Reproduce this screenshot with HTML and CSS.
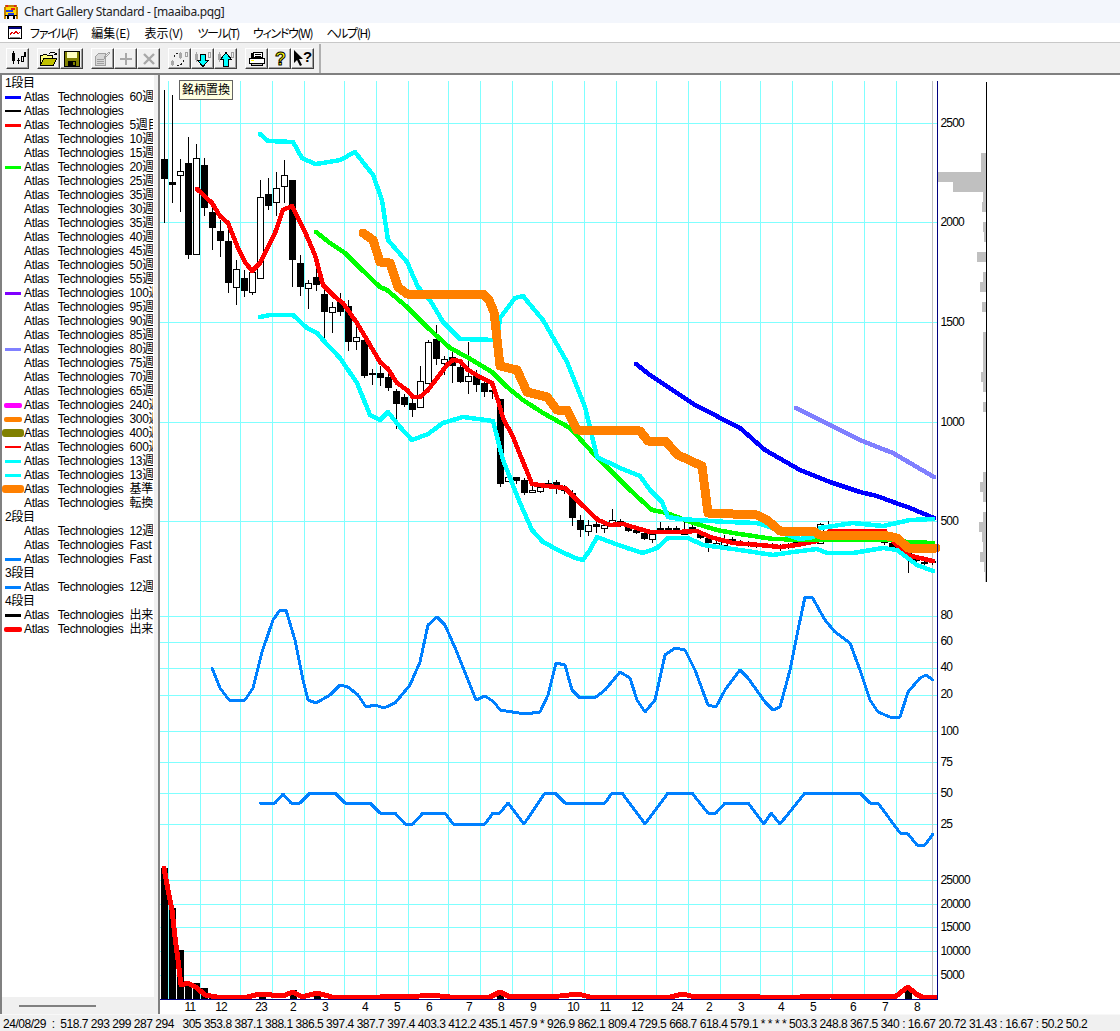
FILE: index.html
```html
<!DOCTYPE html>
<html lang="ja">

<head>
    <meta charset="UTF-8">
    <title>Chart Gallery Standard - [maaiba.pqg]</title>
    <link rel="stylesheet" href="styles.css">
</head>

<body>
    <div class="app">
        <header class="titlebar">
            <svg class="app-icon" width="16" height="16" viewBox="0 0 16 16" shape-rendering="crispEdges">
                <path fill="#c08000" d="M2 1h12v2H2zM1 3h2v12H1zM13 3h2v12h-2z"/>
                <path fill="#ffd800" d="M3 3h10v8H3z"/>
                <path fill="#e02020" d="M3 1h2v2H3zM11 1h2v2h-2zM8 4h4v2H8z"/>
                <path fill="#2040e0" d="M3 6h7v2H3zM5 9h6v2H5z"/>
                <path fill="#000" d="M2 11h12v1H2zM4 12h2v3H4zM10 12h2v3h-2z"/>
            </svg>
            <span>Chart Gallery Standard - [maaiba.pqg]</span>
        </header>

        <nav class="menubar">
            <svg class="doc-icon" width="14" height="13" viewBox="0 0 14 13" shape-rendering="crispEdges">
                <path fill="#fff" stroke="#000" d="M.5.5h13v12H.5z"/>
                <path fill="#000080" d="M1 1h12v2H1z"/>
                <path fill="none" stroke="#e00000" d="M2 9l2-3 2 2 2-3 2 3 2-2"/>
                <path fill="none" stroke="#808080" d="M2 11h10"/>
            </svg>
            <ul class="menu">
                <li class="kana">ファイル(F)</li>
                <li>編集(E)</li>
                <li>表示(V)</li>
                <li class="kana">ツール(T)</li>
                <li class="kana">ウィンドウ(W)</li>
                <li class="kana">ヘルプ(H)</li>
            </ul>
        </nav>

        <div class="toolbar">
            <div class="tool-group">
                <button class="tool"><svg width="16" height="15" viewBox="0 0 16 15" shape-rendering="crispEdges"><path fill="#000" d="M3 0h1v2h1v8H4v3H3v-3H2V2h1zM8 7h1v2h1v1H9v3H8v-3H7V9h1z"/><path fill="none" stroke="#000" d="M11.500 5.500h2v5h-2zM14.500 1.500h1v4h-1z"/></svg></button>
            </div>
            <div class="tool-group">
                <button class="tool"><svg width="18" height="16" viewBox="0 0 18 16" shape-rendering="crispEdges"><path fill="#ffff80" stroke="#000" d="M.5 4.500h2l1-1h3l1 1h5v3h-8l-4 7z"/><path fill="#c0c000" stroke="#000" d="M.5 14.500l3-7h13l-3 7z"/><path fill="none" stroke="#000" d="M9 3l2-2h3l2 2M14 3h3M16.500 2v2"/></svg></button>
                <button class="tool"><svg width="16" height="16" viewBox="0 0 16 16" shape-rendering="crispEdges"><path fill="#000" d="M0 0h16v16H0z"/><path fill="#808000" d="M1 1h14v14H1z"/><path fill="#ffffc0" d="M3 1h10v6H3z"/><path fill="#000" d="M4 10h8v5H4z"/><path fill="#808000" d="M9 11h2v3H9z"/></svg></button>
            </div>
            <div class="tool-group">
                <button class="tool" disabled><svg width="18" height="16" viewBox="0 0 18 16" shape-rendering="crispEdges"><path fill="#d8d8d8" stroke="#a0a0a0" d="M1.500 5.500l3-3h7v12h-10z"/><path fill="none" stroke="#a0a0a0" d="M3 8h7M3 10h7M3 12h7M12 6l4-4-1-1-5 5v1h2"/></svg></button>
                <button class="tool" disabled><svg width="14" height="14" viewBox="0 0 14 14" shape-rendering="crispEdges"><path fill="#a8a8a8" d="M6 1h2v5h5v2H8v5H6V8H1V6h5z"/></svg></button>
                <button class="tool" disabled><svg width="14" height="14" viewBox="0 0 14 14"><path stroke="#a8a8a8" stroke-width="2.400" d="M2 2l10 10M12 2L2 12"/></svg></button>
            </div>
            <div class="tool-group">
                <button class="tool" disabled><svg width="18" height="16" viewBox="0 0 18 16" shape-rendering="crispEdges"><path fill="#a8a8a8" d="M1 9h1v1h1v4H2v1H1v-1H0v-4h1zM9 1h1v1h1v5h-1v1H9V7H8V2h1z"/><path fill="none" stroke="#202020" stroke-dasharray="2 2" d="M7 2.500H5L3 5v3M6 14.500h3l3-3V9"/><path fill="none" stroke="#a0a0a0" d="M14.500 1.500h2v4h-2z"/></svg></button>
                <button class="tool"><svg width="18" height="16" viewBox="0 0 18 16" shape-rendering="crispEdges"><path fill="#a8a8a8" d="M2 1h1v2h1v6H3v2H2V9H1V3h1z"/><path fill="none" stroke="#a0a0a0" d="M14.500 1.500h2v5h-2z"/><path fill="#00ffff" stroke="#000" d="M6.500 3.500h5v6h3l-5.500 6-5.500-6h3z"/></svg></button>
                <button class="tool"><svg width="18" height="16" viewBox="0 0 18 16" shape-rendering="crispEdges"><path fill="#a8a8a8" d="M2 1h1v2h1v6H3v2H2V9H1V3h1z"/><path fill="none" stroke="#a0a0a0" d="M14.500 1.500h2v5h-2z"/><path fill="#00ffff" stroke="#000" d="M6.500 15.500v-7h-3l5.500-7 5.500 7h-3v7z"/></svg></button>
            </div>
            <div class="tool-group">
                <button class="tool"><svg width="18" height="16" viewBox="0 0 18 16" shape-rendering="crispEdges"><path fill="#fff" stroke="#000" d="M5.500 1.500h9v5h-9zM1.500 7.500h15v5h-15z"/><path fill="#c0c0c0" stroke="#000" d="M3.500 12.500h11v2h-11z"/><path fill="#000" d="M3 2h2v5H3zM7 3h6v1H7zM7 5h6v1H7z"/><path fill="#ffff00" d="M3 9h3v1H3z"/></svg></button>
                <button class="tool"><svg width="14" height="18" viewBox="0 0 14 18"><text class="qmark" x="2" y="15">?</text></svg></button>
                <button class="tool"><svg width="20" height="17" viewBox="0 0 20 17"><path fill="#000" d="M1 0l9 9H6l3 6-2 1-3-6-3 3z"/><text class="qhelp" x="10" y="12">?</text></svg></button>
            </div>
        </div>

        <main class="workspace">
            <aside class="legend-pane">
                <ul class="legend">
                    <li class="row"><span class="head">1段目</span></li>
                    <li class="row"><i class="sw c-blue"></i>Atlas   Technologies  60週</li>
                    <li class="row"><i class="sw thin c-black"></i>Atlas   Technologies</li>
                    <li class="row"><i class="sw c-red"></i>Atlas   Technologies  5週目</li>
                    <li class="row"><i class="sw none"></i>Atlas   Technologies  10週</li>
                    <li class="row"><i class="sw none"></i>Atlas   Technologies  15週</li>
                    <li class="row"><i class="sw c-green"></i>Atlas   Technologies  20週</li>
                    <li class="row"><i class="sw none"></i>Atlas   Technologies  25週</li>
                    <li class="row"><i class="sw none"></i>Atlas   Technologies  35週</li>
                    <li class="row"><i class="sw none"></i>Atlas   Technologies  30週</li>
                    <li class="row"><i class="sw none"></i>Atlas   Technologies  35週</li>
                    <li class="row"><i class="sw none"></i>Atlas   Technologies  40週</li>
                    <li class="row"><i class="sw none"></i>Atlas   Technologies  45週</li>
                    <li class="row"><i class="sw none"></i>Atlas   Technologies  50週</li>
                    <li class="row"><i class="sw none"></i>Atlas   Technologies  55週</li>
                    <li class="row"><i class="sw c-violet"></i>Atlas   Technologies  100週</li>
                    <li class="row"><i class="sw none"></i>Atlas   Technologies  95週</li>
                    <li class="row"><i class="sw none"></i>Atlas   Technologies  90週</li>
                    <li class="row"><i class="sw none"></i>Atlas   Technologies  85週</li>
                    <li class="row"><i class="sw c-lilac"></i>Atlas   Technologies  80週</li>
                    <li class="row"><i class="sw none"></i>Atlas   Technologies  75週</li>
                    <li class="row"><i class="sw none"></i>Atlas   Technologies  70週</li>
                    <li class="row"><i class="sw none"></i>Atlas   Technologies  65週</li>
                    <li class="row"><i class="sw mid c-magenta"></i>Atlas   Technologies  240週</li>
                    <li class="row"><i class="sw mid c-orange"></i>Atlas   Technologies  300週</li>
                    <li class="row"><i class="sw big c-olive"></i>Atlas   Technologies  400週</li>
                    <li class="row"><i class="sw thin c-red"></i>Atlas   Technologies  600週</li>
                    <li class="row"><i class="sw c-cyan"></i>Atlas   Technologies  13週</li>
                    <li class="row"><i class="sw c-cyan"></i>Atlas   Technologies  13週</li>
                    <li class="row"><i class="sw big c-orange"></i>Atlas   Technologies  基準</li>
                    <li class="row"><i class="sw none"></i>Atlas   Technologies  転換</li>
                    <li class="row"><span class="head">2段目</span></li>
                    <li class="row"><i class="sw none"></i>Atlas   Technologies  12週</li>
                    <li class="row"><i class="sw none"></i>Atlas   Technologies  Fast</li>
                    <li class="row"><i class="sw c-sky"></i>Atlas   Technologies  Fast</li>
                    <li class="row"><span class="head">3段目</span></li>
                    <li class="row"><i class="sw c-sky"></i>Atlas   Technologies  12週</li>
                    <li class="row"><span class="head">4段目</span></li>
                    <li class="row"><i class="sw c-black"></i>Atlas   Technologies  出来</li>
                    <li class="row"><i class="sw mid c-red"></i>Atlas   Technologies  出来</li>
                </ul>
                <div class="legend-scroll"><span class="thumb"></span></div>
            </aside>

            <section class="chart-pane">
                <div class="tip">銘柄置換</div>
                <svg class="chart" width="960" height="938" viewBox="160 75 960 938" shape-rendering="crispEdges">
                    <!-- 罫線 -->
                    <path class="grid" d="M168.500 81V999M200.500 81V999M240.500 81V999M272.500 81V999M304.500 81V999M344.500 81V999M376.500 81V999M408.500 81V999M448.500 81V999M480.500 81V999M512.500 81V999M552.500 81V999M584.500 81V999M616.500 81V999M656.500 81V999M688.500 81V999M720.500 81V999M760.500 81V999M792.500 81V999M832.500 81V999M864.500 81V999M896.500 81V999"/>
                    <path class="grid" d="M160 123.500H938M160 222.500H938M160 322.500H938M160 422.500H938M160 521.500H938M160 616.500H938M160 642.500H938M160 668.500H938M160 695.500H938M160 731.500H938M160 762.500H938M160 793.500H938M160 824.500H938M160 880.500H938M160 904.500H938M160 927.500H938M160 951.500H938M160 975.500H938"/>
                    <path class="edge-gray" d="M932.500 81V999"/>

                    <!-- 価格帯別 -->
                    <path class="hist" d="M981 153h5v19h-5zM937 172h49v10h-49zM953 182h33v10h-33zM983 192h3v10h-3zM982 202h4v10h-4zM983 222h3v10h-3zM984 232h2v10h-2zM977 252h9v10h-9zM983 272h3v10h-3zM980 282h6v10h-6zM982 302h4v10h-4zM983 332h3v40h-3zM981 372h5v10h-5zM983 382h3v10h-3zM983 402h3v10h-3zM983 472h3v10h-3zM980 482h6v10h-6zM983 492h3v10h-3zM983 512h3v10h-3zM979 522h7v10h-7zM982 532h4v10h-4zM983 542h3v10h-3zM980 552h6v10h-6zM984 562h2v10h-2zM985 572h1v10h-1z"/>
                    <path class="axis-black" d="M986.500 82V582"/>

                    <!-- ローソク足 -->
                    <path class="wick" d="M164.500 90V223M172.500 95V203M180.500 159V212M188.500 137V259M196.500 144V254M204.500 158V216M212.500 208V250M220.500 220V257M228.500 230V293M236.500 260V305M244.500 270V297M252.500 267V295M260.500 180V278M268.500 178V210M276.500 172V216M284.500 160V203M292.500 180V287M300.500 255V296M308.500 280V309M316.500 265V291M324.500 288V340M332.500 302V333M340.500 293V316M348.500 300V351M356.500 327V350M364.500 340V378M372.500 369V385M380.500 366V386M388.500 366V391M396.500 389V429M404.500 394V407M412.500 397V417M420.500 366V407M428.500 340V383M436.500 325V365M444.500 356V375M452.500 350V383M460.500 363V383M468.500 342V394M476.500 370V392M484.500 377V397M492.500 383V399M500.500 399V487M508.500 477V481M516.500 477V484M524.500 478V495M532.500 480V492M540.500 485V493M548.500 480V487M556.500 480V494M564.500 485V494M572.500 490V526M580.500 515V537M588.500 520V536M596.500 522V533M604.500 520V533M612.500 509V524M620.500 519V527M628.500 525V532M636.500 528V534M644.500 531V540M652.500 534V543M660.500 522V532M668.500 526V532M676.500 526V534M684.500 522V534M692.500 525V531M700.500 530V539M708.500 535V552M716.500 540V548M724.500 535V547M732.500 537V544M740.500 540V545M748.500 541V547M756.500 542V548M764.500 543V548M772.500 543V549M780.500 544V551M788.500 543V549M796.500 541V547M804.500 538V546M812.500 538V544M820.500 523V544M828.500 521V533M884.500 538V545M892.500 541V550M900.500 545V555M908.500 553V573M916.500 556V562M924.500 560V566M932.500 559V565"/>
                    <path class="body-up" d="M177.500 171.500h6v4h-6zM193.500 158.500h6v96h-6zM233.500 269.500h6v18h-6zM249.500 272.500h6v20h-6zM257.500 197.500h6v81h-6zM273.500 188.500h6v14h-6zM281.500 175.500h6v11h-6zM305.500 283.500h6v5h-6zM329.500 307.500h6v5h-6zM353.500 337.500h6v4h-6zM417.500 381.500h6v26h-6zM425.500 342.500h6v41h-6zM441.500 359.500h6v4h-6zM465.500 376.500h6v5h-6zM505.500 477.500h6v4h-6zM529.500 490.500h6v2h-6zM537.500 487.500h6v4h-6zM545.500 483.500h6v4h-6zM585.500 525.500h6v6h-6zM601.500 525.500h6v3h-6zM609.500 520.500h6v3h-6zM649.500 534.500h6v5h-6zM681.500 532.500h6v2h-6zM713.500 543.500h6v3h-6zM721.500 541.500h6v4h-6zM793.500 542.500h6v3h-6zM801.500 540.500h6v4h-6zM809.500 538.500h6v5h-6zM817.500 524.500h6v19h-6z"/>
                    <path class="body-down" d="M161 159h7v20h-7zM169 182h7v3h-7zM185 163h7v92h-7zM201 165h7v43h-7zM209 212h7v16h-7zM217 231h7v10h-7zM225 241h7v42h-7zM241 278h7v13h-7zM265 194h7v12h-7zM289 180h7v80h-7zM297 263h7v24h-7zM313 277h7v8h-7zM321 294h7v18h-7zM337 301h7v11h-7zM345 306h7v36h-7zM361 340h7v36h-7zM369 373h7v2h-7zM377 373h7v5h-7zM385 377h7v11h-7zM393 391h7v13h-7zM401 397h7v8h-7zM409 403h7v7h-7zM433 339h7v20h-7zM449 357h7v9h-7zM457 367h7v15h-7zM473 376h7v9h-7zM481 383h7v9h-7zM489 390h7v2h-7zM497 399h7v85h-7zM513 477h7v4h-7zM521 480h7v13h-7zM553 482h7v6h-7zM561 487h7v4h-7zM569 493h7v25h-7zM577 520h7v10h-7zM593 524h7v3h-7zM617 521h7v5h-7zM625 527h7v4h-7zM633 530h7v3h-7zM641 533h7v6h-7zM657 528h7v2h-7zM665 528h7v2h-7zM673 528h7v4h-7zM689 527h7v3h-7zM697 532h7v6h-7zM705 538h7v5h-7zM729 539h7v3h-7zM737 542h7v2h-7zM745 543h7v2h-7zM753 544h7v2h-7zM761 545h7v2h-7zM769 545h7v2h-7zM777 546h7v3h-7zM785 545h7v2h-7zM825 525h7v3h-7zM881 540h7v3h-7zM889 543h7v5h-7zM897 547h7v6h-7zM905 553h7v3h-7zM913 558h7v3h-7zM921 562h7v2h-7zM929 561h7v2h-7z"/>

                    <!-- 移動平均 -->
                    <polyline class="ln c-blue-l" points="636,364 650,375 665,385 695,405 740,428 765,450 800,470 830,482 860,492 877,496 893,502 910,508 934,518"/>
                    <polyline class="ln c-red-l" points="197,189 212,203 220,216 228,223 238,248 245,262 252,271 260,263 275,233 283,210 292,206 305,232 315,255 323,285 335,297 343,303 357,323 380,362 388,369 397,383 407,390 413,397 420,397 428,390 447,365 453,360 460,361 468,370 480,377 492,383 497,397 503,418 513,437 532,484 547,486 565,488 580,503 598,520 610,525 623,524 633,527 650,532 677,532 697,531 710,537 733,543 760,545 780,547 797,545 817,541 830,531 885,531 893,541 907,555 933,561"/>
                    <polyline class="ln c-green-l" points="316,232 330,243 345,253 360,268 380,287 387,290 407,307 427,327 450,348 467,357 492,372 507,387 523,400 543,413 570,428 593,453 630,490 652,510 667,513 690,522 717,530 733,533 773,539 813,540 893,540 908,542 933,543"/>
                    <polyline class="ln c-lilac-l" points="796,408 820,420 850,435 860,440 880,448 893,453 910,463 934,477"/>
                    <polyline class="ln c-cyan-l" points="260,134 268,141 293,142 302,158 315,164 323,163 340,160 355,152 373,175 382,200 388,240 407,262 418,287 430,300 443,322 460,339 497,340 500,318 515,298 523,296 543,320 567,362 585,407 597,457 620,468 640,476 650,490 662,502 668,517 680,519 727,522 757,523 770,527 782,533 800,539 813,537 820,528 853,523 883,526 910,520 933,519"/>
                    <polyline class="ln c-cyan-l" points="260,317 270,315 293,315 307,328 317,333 323,340 340,358 357,383 370,415 380,420 388,412 400,427 412,440 428,434 443,423 463,417 493,421 503,460 520,503 532,530 543,542 560,551 575,558 583,560 590,550 597,537 613,543 627,548 643,553 657,548 668,538 688,538 703,545 733,549 773,555 793,552 817,549 827,553 853,553 883,548 897,550 917,565 933,571"/>
                    <polyline class="ln-base" points="363,233 373,240 380,262 390,263 398,287 407,294 483,294 489,300 494,312 500,366 517,370 527,392 547,397 557,410 567,410 577,430 640,431 648,441 665,441 678,455 702,466 708,513 757,515 767,520 780,531 813,531 820,535 883,535 897,538 908,548 936,548"/>

                    <!-- 2段目 3段目 -->
                    <polyline class="ln-sub" points="212,668 220,688 229,700 245,700 253,688 262,652 273,620 280,610 286,610 295,640 303,680 308,700 316,703 330,695 340,685 348,687 358,695 366,707 375,705 384,708 395,703 410,685 420,662 428,625 437,617 445,625 456,650 468,680 476,700 485,696 494,702 500,710 525,714 540,712 548,695 556,663 565,665 572,690 580,698 596,697 605,690 620,672 630,678 637,700 645,712 655,700 665,655 675,648 685,650 695,670 708,705 716,707 725,690 740,670 748,678 765,702 773,710 780,707 790,670 798,630 805,597 812,597 825,620 835,632 850,643 860,670 870,700 878,712 890,717 900,717 908,692 920,678 926,675 933,680"/>
                    <polyline class="ln-sub" points="260,803 275,803 283,794 291,803 300,803 310,793 335,793 345,803 370,803 380,813 395,813 405,824 413,824 423,813 445,813 453,824 485,824 493,813 500,813 508,803 524,824 545,793 555,793 565,803 605,803 612,793 622,793 645,824 668,793 692,793 708,813 716,813 725,803 748,803 764,824 771,813 780,824 805,793 860,793 870,803 878,803 900,833 908,834 917,845 925,845 933,834"/>

                    <!-- 出来高 -->
                    <path class="body-down" d="M161 868h7v131h-7zM169 908h7v91h-7zM177 950h7v49h-7zM185 985h7v14h-7zM193 983h7v16h-7zM201 988h7v11h-7zM209 994h7v5h-7zM217 996h7v3h-7zM259 994h7v5h-7zM290 990h7v9h-7zM314 991h7v8h-7zM497 992h7v7h-7zM905 988h7v11h-7z"/>
                    <polyline class="ln-vol" points="164,868 168,890 172,910 175,937 178,960 181,985 188,983 197,988 205,995 217,997 238,997 247,997 260,994 283,996 293,992 302,997 317,993 332,997 380,997 420,996 430,995 450,997 490,997 500,992 510,997 560,996 578,994 590,997 670,997 683,994 695,997 730,996 760,997 800,997 830,996 895,997 900,993 908,987 916,994 922,997 936,997"/>

                    <path class="edge-navy" d="M160 999.500H938M937.500 81V1000"/>

                    <!-- 目盛 -->
                    <g class="ax">
                        <text x="940.500" y="127">2500</text>
                        <text x="940.500" y="226">2000</text>
                        <text x="940.500" y="326">1500</text>
                        <text x="940.500" y="426">1000</text>
                        <text x="940.500" y="525">500</text>
                        <text x="940.500" y="619">80</text>
                        <text x="940.500" y="645">60</text>
                        <text x="940.500" y="671">40</text>
                        <text x="940.500" y="698">20</text>
                        <text x="940.500" y="735">100</text>
                        <text x="940.500" y="766">75</text>
                        <text x="940.500" y="797">50</text>
                        <text x="940.500" y="828">25</text>
                        <text x="940.500" y="884">25000</text>
                        <text x="940.500" y="908">20000</text>
                        <text x="940.500" y="931">15000</text>
                        <text x="940.500" y="955">10000</text>
                        <text x="940.500" y="979">5000</text>
                    </g>
                    <g class="ax ax-mid">
                        <text x="190" y="1011">11</text>
                        <text x="221" y="1011">12</text>
                        <text x="261" y="1011">23</text>
                        <text x="293" y="1011">2</text>
                        <text x="325" y="1011">3</text>
                        <text x="365" y="1011">4</text>
                        <text x="397" y="1011">5</text>
                        <text x="429" y="1011">6</text>
                        <text x="469" y="1011">7</text>
                        <text x="501" y="1011">8</text>
                        <text x="533" y="1011">9</text>
                        <text x="573" y="1011">10</text>
                        <text x="605" y="1011">11</text>
                        <text x="637" y="1011">12</text>
                        <text x="677" y="1011">24</text>
                        <text x="709" y="1011">2</text>
                        <text x="741" y="1011">3</text>
                        <text x="781" y="1011">4</text>
                        <text x="813" y="1011">5</text>
                        <text x="853" y="1011">6</text>
                        <text x="885" y="1011">7</text>
                        <text x="917" y="1011">8</text>
                    </g>
                </svg>
            </section>
        </main>

        <footer class="statusbar">24/08/29  :  518.7 293 299 287 294   305 353.8 387.1 388.1 386.5 397.4 387.7 397.4 403.3 412.2 435.1 457.9 * 926.9 862.1 809.4 729.5 668.7 618.4 579.1 * * * * 503.3 248.8 367.5 340 : 16.67 20.72 31.43 : 16.67 : 50.2 50.2</footer>
    </div>
</body>

</html>
```

FILE: styles.css
```css
* {
    box-sizing: border-box;
}

body {
    margin: 0;
    font-family: "Liberation Sans", "Noto Sans CJK JP", sans-serif;
    font-size: 12px;
    color: #000;
    background: #f0f0f0;
}

.app {
    display: flex;
    flex-direction: column;
    height: 1031px;
    overflow: hidden;
}

/* title */
.titlebar {
    display: flex;
    align-items: center;
    gap: 5px;
    height: 23px;
    padding-left: 3px;
    font-family: "Noto Sans", sans-serif;
    letter-spacing: -0.35px;
    color: #222;
    background: #f3f6fc;
}

/* menu */
.menubar {
    display: flex;
    align-items: center;
    height: 19px;
    padding-left: 8px;
    background: #fff;
}

.menu {
    display: flex;
    gap: 14px;
    margin: 0 0 0 8px;
    padding: 0;
    list-style: none;
    font-family: "Noto Sans CJK JP", sans-serif;
    font-feature-settings: "palt";
}

.kana {
    letter-spacing: -1.3px;
}

/* toolbar */
.toolbar {
    display: flex;
    gap: 8px;
    height: 33px;
    padding: 5px 0 0 6px;
    border-top: 1px solid #c8c8c8;
    border-bottom: 2px solid #808080;
    background: #f0f0f0;
}

.tool-group {
    display: flex;
}

.tool-group:last-child {
    padding-right: 5px;
    border-right: 2px solid #b0b0b0;
    margin-top: -4px;
    padding-top: 4px;
}

.tool {
    display: flex;
    align-items: center;
    justify-content: center;
    width: 23px;
    height: 21px;
    padding: 0;
    border: 1px solid;
    border-color: #fff #404040 #404040 #fff;
    box-shadow: inset -1px -1px 0 #a0a0a0;
    background: #f0f0f0;
}

.tool svg {
    overflow: visible;
}

.qmark {
    font: bold 18px "Liberation Sans", sans-serif;
    fill: #ffff00;
    stroke: #000;
    stroke-width: 1px;
}

.qhelp {
    font: bold 15px "Liberation Sans", sans-serif;
    fill: #000;
}

/* main */
.workspace {
    display: flex;
    flex: 1;
    min-height: 0;
}

.legend-pane {
    display: flex;
    flex-direction: column;
    flex: none;
    width: 158px;
    border-left: 2px solid #808080;
    border-right: 4px solid #f0f0f0;
    background: #fff;
}

.legend {
    flex: 1;
    width: 151px;
    margin: 1px 0 0;
    padding: 0;
    list-style: none;
    overflow: hidden;
}

.row {
    display: flex;
    align-items: center;
    height: 14px;
    line-height: 14px;
    letter-spacing: -0.35px;
    white-space: pre;
}

.head {
    padding-left: 3px;
}

.sw {
    flex: none;
    width: 16px;
    height: 3px;
    margin: 0 3px;
}

.sw.thin {
    height: 2px;
}

.sw.mid {
    width: 18px;
    height: 5px;
    margin: 0 2px;
    border-radius: 2px;
}

.sw.big {
    width: 22px;
    height: 8px;
    margin: 0;
    border-radius: 3px;
}

.c-blue { background: #0000ff; }
.c-black { background: #000; }
.c-red { background: #ff0000; }
.c-green { background: #00ff00; }
.c-violet { background: #8000ff; }
.c-lilac { background: #8080ff; }
.c-magenta { background: #ff00ff; }
.c-orange { background: #ff8000; }
.c-olive { background: #808000; }
.c-cyan { background: #00ffff; }
.c-sky { background: #0080ff; }

.legend-scroll {
    display: flex;
    align-items: center;
    height: 17px;
    padding-left: 17px;
    background: #f0f0f0;
}

.thumb {
    width: 77px;
    height: 2px;
    background: #808080;
}

/* chart */
.chart-pane {
    position: relative;
    flex: 1;
    border-left: 2px solid #808080;
    background: #fff;
}

.chart {
    display: block;
}

.tip {
    position: absolute;
    top: 5px;
    left: 19px;
    z-index: 2;
    width: 54px;
    height: 20px;
    line-height: 18px;
    text-align: center;
    border: 1px solid #646464;
    background: #ffffe1;
}

.grid {
    fill: none;
    stroke: #80ffff;
}

.edge-gray {
    fill: none;
    stroke: #c0c0c0;
}

.edge-navy {
    fill: none;
    stroke: #000080;
}

.hist {
    fill: #c0c0c0;
}

.axis-black,
.wick {
    fill: none;
    stroke: #000;
}

.body-up {
    fill: #fff;
    stroke: #000;
}

.body-down {
    fill: #000;
}

.ln,
.ln-base,
.ln-sub,
.ln-vol {
    fill: none;
    stroke-linejoin: round;
    stroke-linecap: round;
}

.ln {
    stroke-width: 4.500;
}

.c-blue-l { stroke: #0000ff; }
.c-red-l { stroke: #ff0000; }
.c-green-l { stroke: #00ff00; }
.c-lilac-l { stroke: #8080ff; }
.c-cyan-l { stroke: #00ffff; }

.ln-base {
    stroke: #ff8000;
    stroke-width: 9;
}

.ln-sub {
    stroke: #0080ff;
    stroke-width: 3;
}

.ln-vol {
    stroke: #ff0000;
    stroke-width: 5;
}

.ax {
    font-size: 12px;
    letter-spacing: -0.8px;
    fill: #000;
}

.ax-mid {
    text-anchor: middle;
}

/* status */
.statusbar {
    height: 17px;
    padding: 2px 0 0 3px;
    line-height: 15px;
    letter-spacing: -0.47px;
    white-space: pre;
    border-top: 1px solid #f8f8f8;
    background: #f0f0f0;
}
```
